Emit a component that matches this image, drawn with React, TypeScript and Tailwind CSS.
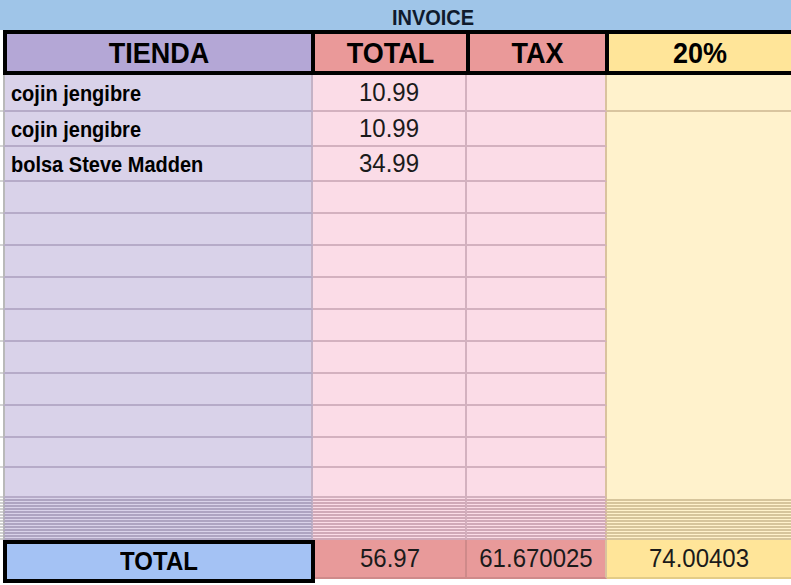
const rows = [
  { name: "cojin jengibre", total: "10.99", h: "h-[37px]", line: true },
  { name: "cojin jengibre", total: "10.99", h: "h-[35px]", line: false },
  { name: "bolsa Steve Madden", total: "34.99", h: "h-[35px]", line: false },
  { name: "", total: "", h: "h-[32px]", line: false },
  { name: "", total: "", h: "h-[32px]", line: false },
  { name: "", total: "", h: "h-[32px]", line: false },
  { name: "", total: "", h: "h-[32px]", line: false },
  { name: "", total: "", h: "h-[32px]", line: false },
  { name: "", total: "", h: "h-[32px]", line: false },
  { name: "", total: "", h: "h-[32px]", line: false },
  { name: "", total: "", h: "h-[32px]", line: false },
  { name: "", total: "", h: "h-[30px]", line: false },
  { name: "", total: "", h: "h-[30px]", line: false },
];

const stripes = Array.from({ length: 14 }, (_, i) => i);

export default function App() {
  return (
    <div className="w-[791px] h-[585px] overflow-hidden bg-white font-['Liberation_Sans',Arial,sans-serif] text-black">
      {/* banner */}
      <div className="h-[30px] bg-[#9fc5e8] flex items-center justify-center pl-[75px] pt-[4px] text-[20px] font-bold leading-none text-[#0f1b2d]">
        <span className="scale-y-110">INVOICE</span>
      </div>

      {/* header */}
      <div className="flex h-[45px]">
        <div className="w-[3px] bg-white" />
        <div className="flex flex-1 border-y-4 border-l-4 border-black text-[27px] font-bold leading-none">
          <div className="w-[308px] border-r-4 border-black bg-[#b4a7d6] flex items-center justify-center pt-[2px]">
            <span className="scale-y-110">TIENDA</span>
          </div>
          <div className="w-[155px] border-r-4 border-black bg-[#ea9999] flex items-center justify-center pt-[2px]">
            <span className="scale-y-110">TOTAL</span>
          </div>
          <div className="w-[139px] border-r-4 border-black bg-[#ea9999] flex items-center justify-center pt-[2px]">
            <span className="scale-y-110">TAX</span>
          </div>
          <div className="flex-1 bg-[#ffe599] flex items-center justify-center pt-[2px]">
            <span className="scale-y-110">20%</span>
          </div>
        </div>
      </div>

      {/* body rows */}
      {rows.map((r, i) => (
        <div key={i} className={`flex ${r.h}`}>
          <div className="w-[3px] border-b-2 border-[#d4d4d4]" />
          <div className="w-[310px] bg-[#d9d2e9] border-l-2 border-l-[#b9b9b9] border-r-2 border-r-[#c4b2c6] border-b-2 border-b-[#b6abc8] flex items-center pl-[6px] pt-[1px] text-[20px] font-bold leading-none">
            <span className="scale-y-110">{r.name}</span>
          </div>
          <div className="w-[154px] bg-[#fbdce7] border-r-2 border-b-2 border-[#d3b1bf] flex items-center justify-center pt-[1px] text-[24px] leading-none text-[#1a1a1a]">
            <span className="scale-y-105">{r.total}</span>
          </div>
          <div className="w-[140px] bg-[#fbdce7] border-r-2 border-r-[#d9c29e] border-b-2 border-b-[#d3b1bf]" />
          <div className={`flex-1 bg-[#fff2cc] ${r.line ? "border-b-2 border-[#d9c59f]" : ""}`} />
        </div>
      ))}

      {/* collapsed rows */}
      {stripes.map((s) => (
        <div key={s} className="flex h-[3px]">
          <div className="w-[3px] border-b-2 border-[#cfcfcf]" />
          <div className="w-[310px] bg-[#d9d2e9] border-l-2 border-l-[#b9b9b9] border-r-2 border-r-[#c4b2c6] border-b-2 border-b-[#aea4c1]" />
          <div className="w-[154px] bg-[#fbdce7] border-r-2 border-r-[#d3b1bf] border-b-2 border-b-[#d0a9b8]" />
          <div className="w-[140px] bg-[#fbdce7] border-r-2 border-r-[#d9c29e] border-b-2 border-b-[#d0a9b8]" />
          <div className="flex-1 bg-[#fff2cc] border-b-2 border-[#d6c59c]" />
        </div>
      ))}

      {/* totals */}
      <div className="flex h-[45px]">
        <div className="w-[3px]" />
        <div className="w-[312px] h-[43px] border-4 border-black bg-[#a4c2f4] flex items-center justify-center text-[24px] font-bold leading-none">
          <span className="scale-y-105">TOTAL</span>
        </div>
        <div className="w-[152px] h-[39px] bg-[#e89a9a] border-r-2 border-b-2 border-[#cf8a8a] flex items-center justify-center text-[24px] leading-none text-[#1a1a1a]">
          <span className="scale-y-105">56.97</span>
        </div>
        <div className="w-[140px] h-[39px] bg-[#e89a9a] border-r-2 border-r-[#d9c29e] border-b-2 border-b-[#cf8a8a] flex items-center justify-center text-[24px] leading-none text-[#1a1a1a]">
          <span className="scale-y-105">61.670025</span>
        </div>
        <div className="flex-1 h-[39px] bg-[#ffe599] border-b-2 border-[#e3cc86] flex items-center justify-center text-[24px] leading-none text-[#1a1a1a]">
          <span className="scale-y-105">74.00403</span>
        </div>
      </div>
    </div>
  );
}
